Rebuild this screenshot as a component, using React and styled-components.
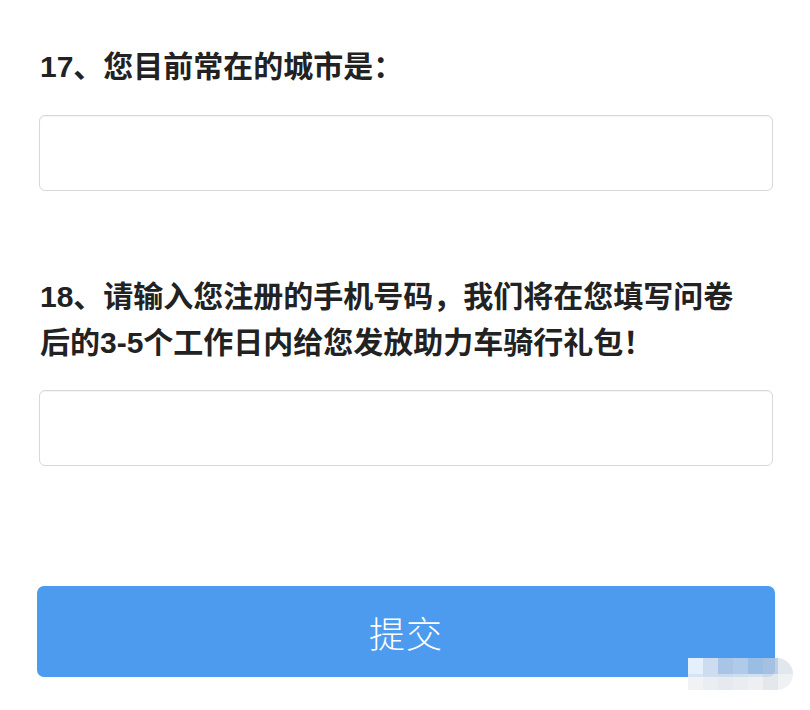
import React from "react";
import styled, { createGlobalStyle } from "styled-components";

const Global = createGlobalStyle`
  html, body { margin: 0; padding: 0; background: #ffffff; }
  body { font-family: "Liberation Sans", "Noto Sans CJK SC", sans-serif; }
`;

const Page = styled.div`
  position: relative;
  width: 810px;
  height: 710px;
  box-sizing: border-box;
  padding: 44px 37px 0 39px;
  display: flex;
  flex-direction: column;
  overflow: hidden;
`;

const Question = styled.div`
  display: flex;
  flex-direction: column;
  gap: ${(p) => p.$gap}px;
  margin-bottom: ${(p) => p.$after}px;
`;

const Title = styled.div`
  font-family: "Liberation Sans", "Noto Sans CJK SC", sans-serif;
  font-weight: 700;
  font-size: 30px;
  line-height: 46px;
  color: #222222;
  padding-left: 1px;
  white-space: nowrap;
`;

const Field = styled.div`
  height: 76px;
  box-sizing: border-box;
  border: 1px solid #d8d8d8;
  border-radius: 6px;
  background: #ffffff;
  box-shadow: inset 0 1px 1px rgba(0, 0, 0, 0.04);
`;

const Submit = styled.div`
  margin: 0 -2px;
  height: 91px;
  border-radius: 7px;
  background: #4c9bef;
  color: #ffffff;
  display: flex;
  align-items: center;
  justify-content: center;
  font-family: "Noto Sans CJK SC", sans-serif;
  font-weight: 300;
  font-size: 36px;
  letter-spacing: 1px;
`;

const Mosaic = styled.div`
  position: absolute;
  left: 688px;
  top: 658px;
  display: grid;
  grid-template-columns: repeat(7, 15px);
  grid-template-rows: repeat(2, 16px);
  border-radius: 0 16px 16px 0;
  overflow: hidden;
  opacity: 0.85;
`;

const Cell = styled.div`
  background: ${(p) => p.$c};
`;

const cells = [
  "#ffffff", "#e4e8ee", "#b9cde6", "#c2d4ea", "#a8c3e3", "#b4c8e0", "#dde2ea",
  "#eef0f3", "#e7eaef", "#e2e6ec", "#e6e9ee", "#ebedf0", "#e0e3e8", "#eeeff1",
];

export default function App() {
  return (
    <>
      <Global />
      <Page>
        <Question $gap={25} $after={83}>
          <Title>17、您目前常在的城市是：</Title>
          <Field />
        </Question>
        <Question $gap={24} $after={120}>
          <Title>
            18、请输入您注册的手机号码，我们将在您填写问卷
            <br />
            后的3-5个工作日内给您发放助力车骑行礼包！
          </Title>
          <Field />
        </Question>
        <Submit>提交</Submit>
        <Mosaic>
          {cells.map((c, i) => (
            <Cell key={i} $c={c} />
          ))}
        </Mosaic>
      </Page>
    </>
  );
}
